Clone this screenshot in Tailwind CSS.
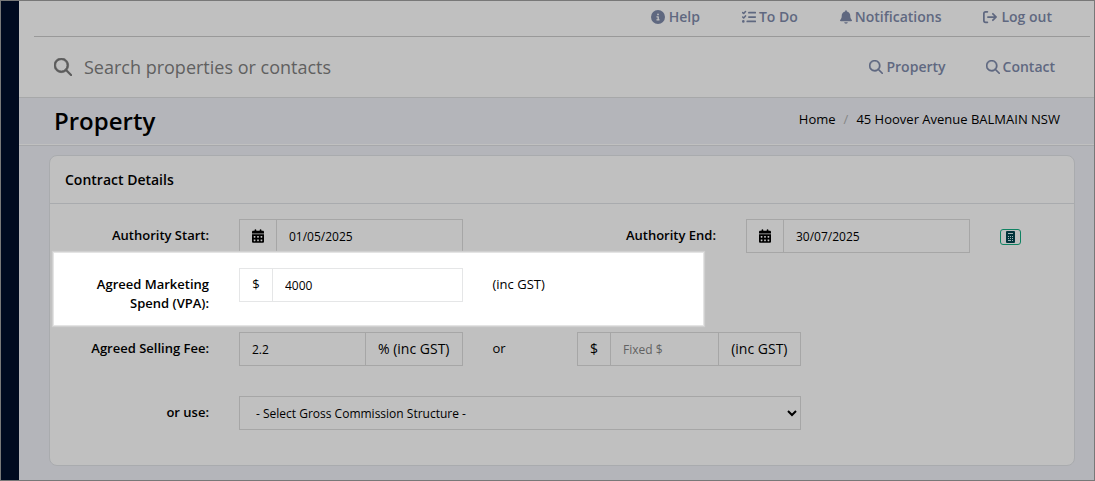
<!DOCTYPE html>
<html lang="en">
<head>
    <meta charset="UTF-8">
    <meta name="viewport" content="width=device-width, initial-scale=1.0">
    <title>Property - 45 Hoover Avenue BALMAIN NSW</title>
    <script src="https://cdn.jsdelivr.net/npm/@tailwindcss/browser@4"></script>
</head>
<body class="bg-[#b4b5ba] font-['Open_Sans',sans-serif] text-[13px] text-black">
    <!-- Shared icons -->
    <svg class="hidden">
        <symbol id="icon-search" viewBox="0 0 512 512"><path d="M368 208a160 160 0 1 0-320 0 160 160 0 1 0 320 0zM337 371c-35 28-80 45-129 45C93 416 0 323 0 208S93 0 208 0s208 93 208 208c0 49-17 94-45 129l134 134c9 9 9 25 0 34s-25 9-34 0L337 371z"/></symbol>
        <symbol id="icon-calendar" viewBox="0 0 448 512"><path fill-rule="evenodd" d="M96 32V64H48C21 64 0 85 0 112v48h448v-48c0-27-21-48-48-48h-48V32c0-18-14-32-32-32s-32 14-32 32v32H160V32c0-18-14-32-32-32S96 14 96 32zM448 192H0v272c0 27 21 48 48 48h352c27 0 48-21 48-48V192zM64 272c0-9 7-16 16-16h32c9 0 16 7 16 16v32c0 9-7 16-16 16H80c-9 0-16-7-16-16v-32zm128 0c0-9 7-16 16-16h32c9 0 16 7 16 16v32c0 9-7 16-16 16h-32c-9 0-16-7-16-16v-32zm144-16h32c9 0 16 7 16 16v32c0 9-7 16-16 16h-32c-9 0-16-7-16-16v-32c0-9 7-16 16-16zM64 400c0-9 7-16 16-16h32c9 0 16 7 16 16v32c0 9-7 16-16 16H80c-9 0-16-7-16-16v-32zm144-16h32c9 0 16 7 16 16v32c0 9-7 16-16 16h-32c-9 0-16-7-16-16v-32c0-9 7-16 16-16zm112 16c0-9 7-16 16-16h32c9 0 16 7 16 16v32c0 9-7 16-16 16h-32c-9 0-16-7-16-16v-32z"/></symbol>
    </svg>

    <div class="flex min-h-screen border border-[#787878]">
        <aside class="w-[18px] shrink-0 bg-[#000a20]"></aside>

        <div class="min-w-0 flex-1">
            <header class="border-b border-[#a7a8a9] bg-[#c0c0c0] text-sm font-semibold text-[#5f6880]">
                <nav class="ml-[15px] mr-1 flex h-9 items-center justify-end gap-[42px] border-b border-[#999] pr-[38px] pb-1">
                    <a href="#" class="flex items-center gap-1">
                        <svg class="size-3.5" viewBox="0 0 512 512" fill="currentColor"><path d="M256 512A256 256 0 1 0 256 0a256 256 0 1 0 0 512zM216 336h24V272H216c-13.3 0-24-10.7-24-24s10.7-24 24-24h48c13.3 0 24 10.7 24 24v88h8c13.3 0 24 10.7 24 24s-10.7 24-24 24H216c-13.3 0-24-10.7-24-24s10.7-24 24-24zm40-208a32 32 0 1 1 0 64 32 32 0 1 1 0-64z"/></svg>
                        Help
                    </a>
                    <a href="#" class="flex items-center gap-[3px]">
                        <svg class="size-3.5" viewBox="0 0 512 512" fill="none" stroke="currentColor" stroke-width="56" stroke-linecap="round" stroke-linejoin="round"><path d="M24 94l38 36 66-74M24 254l38 36 66-74"/><circle cx="48" cy="416" r="20" fill="currentColor"/><path stroke-width="64" d="M252 96h232M252 256h232M192 416h292"/></svg>
                        To Do
                    </a>
                    <a href="#" class="flex items-center gap-[3px]">
                        <svg class="h-3.5 w-3" viewBox="0 0 448 512" fill="currentColor"><path d="M224 0c-17.7 0-32 14.3-32 32V51.2C119 66 64 130.6 64 208v18.8c0 47-17.3 92.4-48.5 127.6l-7.4 8.3c-8.4 9.4-10.4 22.9-5.3 34.4S19.4 416 32 416H416c12.6 0 24-7.4 29.2-18.9s3.1-25-5.3-34.4l-7.4-8.3C401.3 319.2 384 273.9 384 226.8V208c0-77.4-55-142-128-156.8V32c0-17.7-14.3-32-32-32zm45.3 493.3c12-12 18.7-28.3 18.7-45.3H224 160c0 17 6.7 33.3 18.7 45.3s28.3 18.7 45.3 18.7s33.3-6.7 45.3-18.7z"/></svg>
                        Notifications
                    </a>
                    <a href="#" class="flex items-center gap-1">
                        <svg class="size-3.5" viewBox="0 0 512 512" fill="none" stroke="currentColor" stroke-width="64" stroke-linecap="round" stroke-linejoin="round"><path d="M160 64H96a64 64 0 0 0-64 64v256a64 64 0 0 0 64 64h64M180 256h290M362 138l118 118-118 118"/></svg>
                        Log out
                    </a>
                </nav>
                <div class="flex h-[60px] items-center pl-[35px] pr-[39px]">
                    <label for="search" aria-label="Search">
                        <svg class="size-[18px] overflow-visible text-[#5b5b5b]" fill="currentColor" stroke="currentColor" stroke-width="20"><use href="#icon-search"/></svg>
                    </label>
                    <input id="search" type="text" placeholder="Search properties or contacts" class="ml-3 min-w-0 flex-1 text-lg font-normal text-black outline-none placeholder:text-[#606060]">
                    <div class="flex gap-10">
                        <a href="#" class="flex items-center gap-[3px]">
                            <svg class="size-3.5" fill="currentColor" stroke="currentColor" stroke-width="16"><use href="#icon-search"/></svg>
                            Property
                        </a>
                        <a href="#" class="flex items-center gap-[3px]">
                            <svg class="size-3.5" fill="currentColor" stroke="currentColor" stroke-width="16"><use href="#icon-search"/></svg>
                            Contact
                        </a>
                    </div>
                </div>
            </header>

            <div class="flex h-[47px] items-center justify-between border-b border-[#c0c0c0] pl-[35px] pr-[34px]">
                <h1 class="text-2xl font-semibold">Property</h1>
                <nav class="flex gap-2 pb-0.5">
                    <a href="#">Home</a>
                    <span class="text-[#858585]">/</span>
                    <a href="#">45 Hoover Avenue BALMAIN NSW</a>
                </nav>
            </div>

            <main class="border-t border-[#a7a8ab] pt-[9px] pr-[19px] pb-3.5 pl-[30px]">
                <section class="rounded-[8px] border border-[#a9abae] bg-[#c0c0c0]">
                    <h2 class="flex h-12 items-center border-b border-[#a9abae] px-[15px] text-sm font-semibold">Contract Details</h2>

                    <form class="px-[5px] pt-[15px] pb-[35px]">
                        <div class="mb-[15px] grid grid-cols-12">
                            <label for="start" class="col-span-2 px-[15px] pt-[7px] text-right leading-[19px] font-semibold">Authority Start:</label>
                            <div class="col-span-3 px-[15px]">
                                <div class="flex h-[34px] border border-[#a6a6a6]">
                                    <span class="flex w-[37px] shrink-0 items-center justify-center border-r border-[#a6a6a6]">
                                        <svg class="h-3.5 w-3"><use href="#icon-calendar"/></svg>
                                    </span>
                                    <input id="start" type="text" value="01/05/2025" class="w-full min-w-0 px-3 pt-0.5 text-xs outline-none">
                                </div>
                            </div>
                            <label for="end" class="col-span-3 px-[15px] pt-[7px] text-right leading-[19px] font-semibold">Authority End:</label>
                            <div class="col-span-3 px-[15px]">
                                <div class="flex h-[34px] border border-[#a6a6a6]">
                                    <span class="flex w-[37px] shrink-0 items-center justify-center border-r border-[#a6a6a6]">
                                        <svg class="h-3.5 w-3"><use href="#icon-calendar"/></svg>
                                    </span>
                                    <input id="end" type="text" value="30/07/2025" class="w-full min-w-0 px-3 pt-0.5 text-xs outline-none">
                                </div>
                            </div>
                            <div class="flex items-center pt-0.5 pl-[15px]">
                                <button type="button" aria-label="Calculate end date" class="flex h-4 w-[21px] items-center justify-center rounded-[3px] border border-[#0f8262] text-[#02343c]">
                                    <svg class="h-3 w-[9px]" viewBox="0 0 9 12"><path fill="currentColor" fill-rule="evenodd" d="M1 0h7a1 1 0 0 1 1 1v10a1 1 0 0 1-1 1H1a1 1 0 0 1-1-1V1a1 1 0 0 1 1-1z"/><path fill="#a3b4b5" d="M2 2h5v1H2zM2 5h1v1H2zM4 5h1v1H4zM6 5h1v1H6zM2 7h1v1H2zM4 7h1v1H4zM6 7h1v1H6zM2 9h3v1H2zM6 9h1v1H6z"/></svg>
                                </button>
                            </div>
                        </div>

                        <!-- Spotlight row -->
                        <div class="relative grid min-h-16 grid-cols-12 items-start">
                            <div class="absolute -top-4 -left-0.5 h-[74px] w-[651px] max-w-full border border-[#e4e4e4] bg-white shadow-[0_0_1px_1px_#d0d0d0]"></div>
                            <label for="vpa" class="relative col-span-2 px-[15px] pt-[7px] text-right leading-[19px] font-semibold">Agreed Marketing Spend (VPA):</label>
                            <div class="relative col-span-3 px-[15px]">
                                <div class="flex h-[34px] border border-[#e5e6e7]">
                                    <span class="flex w-[33px] shrink-0 items-center justify-center border-r border-[#e5e6e7]">$</span>
                                    <input id="vpa" type="text" value="4000" class="w-full min-w-0 px-3 pt-0.5 text-xs outline-none">
                                </div>
                            </div>
                            <span class="relative col-span-3 px-[15px] pt-[7px] leading-[19px]">(inc GST)</span>
                        </div>

                        <div class="mb-[30px] grid grid-cols-12">
                            <label for="fee" class="col-span-2 px-[15px] pt-[7px] text-right leading-[19px] font-semibold">Agreed Selling Fee:</label>
                            <div class="col-span-3 px-[15px]">
                                <div class="flex h-[34px] border border-[#a6a6a6]">
                                    <input id="fee" type="text" value="2.2" class="w-full min-w-0 px-3 pt-0.5 text-xs outline-none">
                                    <span class="flex shrink-0 items-center border-l border-[#a6a6a6] px-3 text-sm">% (inc GST)</span>
                                </div>
                            </div>
                            <span class="px-[15px] pt-[7px] leading-[19px]">or</span>
                            <div class="col-span-3 px-[15px]">
                                <div class="flex h-[34px] border border-[#a6a6a6]">
                                    <span class="flex w-[33px] shrink-0 items-center justify-center border-r border-[#a6a6a6] text-sm">$</span>
                                    <input type="text" placeholder="Fixed $" aria-label="Fixed fee" class="w-full min-w-0 px-3 pt-0.5 text-xs outline-none placeholder:text-[#626262]">
                                    <span class="flex shrink-0 items-center border-l border-[#a6a6a6] px-3 text-sm">(inc GST)</span>
                                </div>
                            </div>
                        </div>

                        <div class="grid grid-cols-12">
                            <label for="structure" class="col-span-2 px-[15px] pt-[7px] text-right leading-[19px] font-semibold">or use:</label>
                            <div class="relative col-span-7 px-[15px]">
                                <select id="structure" class="h-[34px] w-full appearance-none border border-[#a6a6a6] px-4 pt-0.5 text-xs outline-none">
                                    <option>- Select Gross Commission Structure -</option>
                                </select>
                                <svg class="pointer-events-none absolute top-3.5 right-[19px] h-[7px] w-2.5" viewBox="0 0 10 7" fill="none" stroke="black" stroke-width="2"><path d="M1 1l4 4 4-4"/></svg>
                            </div>
                        </div>
                    </form>
                </section>
            </main>
        </div>
    </div>
</body>
</html>
